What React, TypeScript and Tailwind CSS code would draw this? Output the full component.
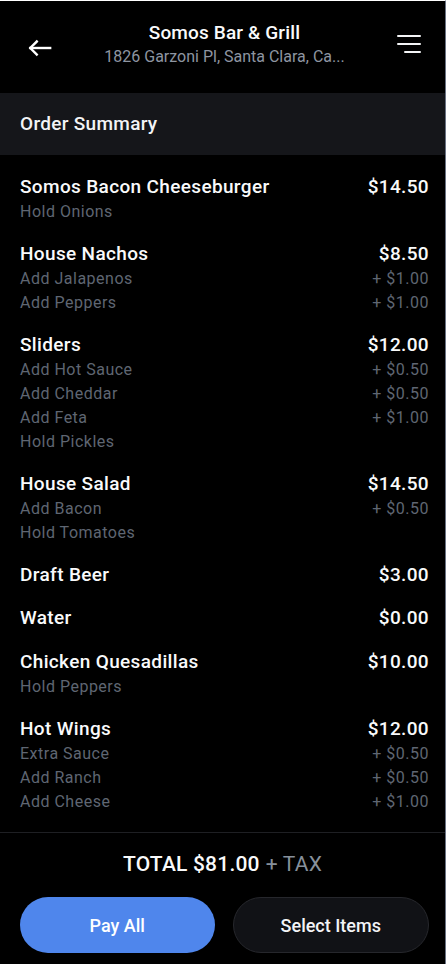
import React from "react";

type Mod = { label: string; price?: string };
type Item = { name: string; price: string; mods: Mod[] };

const items: Item[] = [
  { name: "Somos Bacon Cheeseburger", price: "$14.50", mods: [{ label: "Hold Onions" }] },
  {
    name: "House Nachos",
    price: "$8.50",
    mods: [
      { label: "Add Jalapenos", price: "+ $1.00" },
      { label: "Add Peppers", price: "+ $1.00" },
    ],
  },
  {
    name: "Sliders",
    price: "$12.00",
    mods: [
      { label: "Add Hot Sauce", price: "+ $0.50" },
      { label: "Add Cheddar", price: "+ $0.50" },
      { label: "Add Feta", price: "+ $1.00" },
      { label: "Hold Pickles" },
    ],
  },
  {
    name: "House Salad",
    price: "$14.50",
    mods: [{ label: "Add Bacon", price: "+ $0.50" }, { label: "Hold Tomatoes" }],
  },
  { name: "Draft Beer", price: "$3.00", mods: [] },
  { name: "Water", price: "$0.00", mods: [] },
  { name: "Chicken Quesadillas", price: "$10.00", mods: [{ label: "Hold Peppers" }] },
  {
    name: "Hot Wings",
    price: "$12.00",
    mods: [
      { label: "Extra Sauce", price: "+ $0.50" },
      { label: "Add Ranch", price: "+ $0.50" },
      { label: "Add Cheese", price: "+ $1.00" },
    ],
  },
];

const BackArrow = () => (
  <svg width="26" height="18" viewBox="0 0 26 18" fill="none" stroke="white" strokeWidth="2.6" strokeLinecap="square">
    <path d="M2.5 9H24" />
    <path d="M9.5 2L2.5 9L9.5 16" strokeLinejoin="miter" />
  </svg>
);

const Menu = () => (
  <div className="flex w-6 flex-col items-end gap-[5.5px]">
    <div className="h-[2.5px] w-6 rounded-sm bg-gray-100" />
    <div className="h-[2.5px] w-6 rounded-sm bg-gray-100" />
    <div className="h-[2.5px] w-[17px] rounded-sm bg-gray-100" />
  </div>
);

export default function App() {
  return (
    <div
      className="flex h-[964px] w-[446px] flex-col border-t border-r border-t-white border-r-gray-500 bg-black text-white"
      style={{ fontFamily: "Roboto, 'Noto Sans', sans-serif" }}
    >
      <header className="flex h-[92px] items-center pl-7 pr-6">
        <div className="flex w-6 items-center pt-[2px]">
          <BackArrow />
        </div>
        <div className="flex flex-1 flex-col items-center pb-[6px]">
          <div className="text-[19px] font-medium leading-[26px] tracking-[0.15px] text-gray-50">
            Somos Bar &amp; Grill
          </div>
          <div className="max-w-[250px] truncate text-[16px] leading-[22px] text-[#8e95a1]">
            1826 Garzoni Pl, Santa Clara, Ca...
          </div>
        </div>
        <div className="pb-[6px]">
          <Menu />
        </div>
      </header>

      <div className="flex h-[62px] items-center bg-[#15161a] px-5">
        <span className="text-[19px] font-medium tracking-[0.3px] text-gray-100">Order Summary</span>
      </div>

      <div className="flex flex-1 flex-col gap-[17.7px] pl-5 pr-4 pt-[19px]">
        {items.map((it) => (
          <div key={it.name} className="flex flex-col">
            <div className="flex h-[25.5px] items-center justify-between text-[19px] font-medium tracking-[0.35px] text-gray-50">
              <span>{it.name}</span>
              <span>{it.price}</span>
            </div>
            {it.mods.map((m) => (
              <div
                key={m.label}
                className="flex h-6 items-center justify-between text-[16px] tracking-[0.5px] text-[#5f6672]"
              >
                <span>{m.label}</span>
                {m.price && <span>{m.price}</span>}
              </div>
            ))}
          </div>
        ))}
      </div>

      <div className="h-px bg-[#1e1f23]" />

      <div className="flex h-[64px] items-center justify-center text-[21px] tracking-[0.2px]">
        <span className="font-medium text-gray-50">TOTAL $81.00</span>
        <span className="ml-[6px] text-[#87909b]">+ TAX</span>
      </div>

      <div className="flex gap-[18px] pb-[11px] pl-5 pr-4">
        <button className="flex h-[56px] flex-1 items-center justify-center rounded-full bg-[#4f86ec] text-[18px] font-medium text-white">
          Pay All
        </button>
        <button className="flex h-[56px] flex-1 items-center justify-center rounded-full border border-[#26272c] bg-[#111216] text-[18px] font-medium text-gray-100">
          Select Items
        </button>
      </div>
    </div>
  );
}
